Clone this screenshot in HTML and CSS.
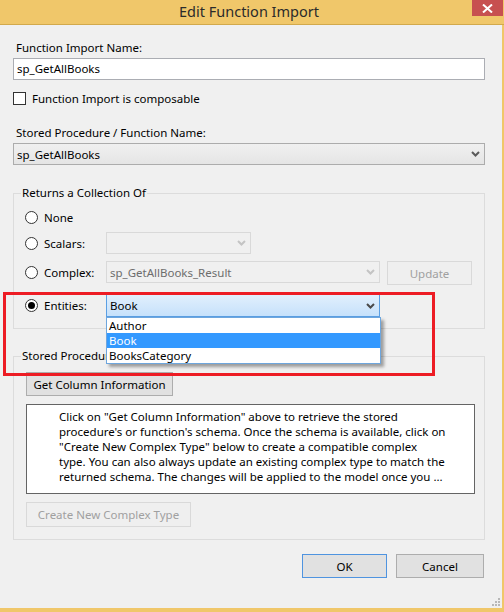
FILE: index.html
```html
<!DOCTYPE html>
<html>
<head>
<meta charset="utf-8">
<link rel="stylesheet" href="styles.css">
</head>
<body>
<div class="window">
  <div class="titlebar">
    <span class="title">Edit Function Import</span>
    <span class="close"><svg width="11" height="9" viewBox="0 0 11 9"><path d="M1 0.5 L10 8.5 M10 0.5 L1 8.5" stroke="#fff" stroke-width="2"/></svg></span>
  </div>
  <div class="content">
    <div class="label l1">Function Import Name:</div>
    <div class="textbox">sp_GetAllBooks</div>
    <div class="check-row">
      <span class="checkbox"></span>
      <span>Function Import is composable</span>
    </div>
    <div class="label l2">Stored Procedure / Function Name:</div>
    <div class="combo combo-normal">
      <span>sp_GetAllBooks</span>
      <svg class="arrow" width="9" height="6" viewBox="0 0 9 6"><path d="M1 1 L4.5 4.5 L8 1" stroke="#5a5a5a" stroke-width="2" fill="none"/></svg>
    </div>

    <div class="group g1">
      <div class="group-title">Returns a Collection Of</div>
      <div class="radio-row r-none">
        <span class="radio"></span><span class="rlabel">None</span>
      </div>
      <div class="radio-row r-scalars">
        <span class="radio"></span><span class="rlabel">Scalars:</span>
        <div class="combo combo-disabled c-scalars">
          <span></span>
          <svg class="arrow" width="9" height="6" viewBox="0 0 9 6"><path d="M1 1 L4.5 4.5 L8 1" stroke="#c4c4c4" stroke-width="2" fill="none"/></svg>
        </div>
      </div>
      <div class="radio-row r-complex">
        <span class="radio"></span><span class="rlabel">Complex:</span>
        <div class="combo combo-disabled c-complex">
          <span class="dis-text">sp_GetAllBooks_Result</span>
          <svg class="arrow" width="9" height="6" viewBox="0 0 9 6"><path d="M1 1 L4.5 4.5 L8 1" stroke="#c4c4c4" stroke-width="2" fill="none"/></svg>
        </div>
        <div class="btn btn-disabled b-update">Update</div>
      </div>
      <div class="radio-row r-entities">
        <span class="radio checked"></span><span class="rlabel">Entities:</span>
        <div class="combo combo-active c-entities">
          <span>Book</span>
          <svg class="arrow" width="9" height="6" viewBox="0 0 9 6"><path d="M1 1 L4.5 4.5 L8 1" stroke="#4a4a4a" stroke-width="2" fill="none"/></svg>
          <div class="dropdown">
            <div class="opt">Author</div>
            <div class="opt sel">Book</div>
            <div class="opt">BooksCategory</div>
          </div>
        </div>
      </div>
    </div>

    <div class="group g2">
      <div class="group-title">Stored Procedure Column Information</div>
      <div class="btn b-getcol">Get Column Information</div>
      <div class="info">Click on "Get Column Information" above to retrieve the stored<br>procedure's or function's schema. Once the schema is available, click on<br>"Create New Complex Type" below to create a compatible complex<br>type. You can also always update an existing complex type to match the<br>returned schema. The changes will be applied to the model once you ...</div>
      <div class="btn btn-disabled b-create">Create New Complex Type</div>
    </div>

    <div class="footer">
      <div class="btn btn-default b-ok">OK</div>
      <div class="btn b-cancel">Cancel</div>
    </div>
    <div class="grip"><svg width="8" height="8" viewBox="0 0 8 8" fill="#b8b8b8"><rect x="6" y="0" width="2" height="2"/><rect x="3" y="3" width="2" height="2"/><rect x="6" y="3" width="2" height="2"/><rect x="0" y="6" width="2" height="2"/><rect x="3" y="6" width="2" height="2"/><rect x="6" y="6" width="2" height="2"/></svg></div>
  </div>
  <div class="highlight"></div>
</div>
</body>
</html>
```

FILE: styles.css
```css
* { box-sizing: border-box; }
html, body { margin: 0; padding: 0; }
body {
  width: 504px;
  height: 612px;
  overflow: hidden;
  font-family: "Noto Sans", "Open Sans", sans-serif;
  font-size: 11.5px;
  color: #000;
  background: #f0f0f0;
}
.window {
  position: relative;
  width: 504px;
  height: 612px;
  background: #f0c76a;
  display: flex;
  flex-direction: column;
}
.titlebar {
  height: 25px;
  border-bottom: 1px solid #d2a94c;
  display: flex;
  align-items: flex-start;
  justify-content: center;
  position: relative;
}
.title {
  font-size: 14.5px;
  color: #2b2b2b;
  line-height: 22px;
  margin-left: -6px;
}
.close {
  position: absolute;
  right: 1px;
  top: 0;
  width: 31px;
  height: 16px;
  background: #c75050;
  display: flex;
  align-items: center;
  justify-content: center;
}
.content {
  flex: 1;
  background: #f0f0f0;
  margin: 0 2px 4px 0;
  padding: 0 17px 0 13px;
  position: relative;
  display: flex;
  flex-direction: column;
}
.label { line-height: 16px; padding-left: 3px; }
.l1 { margin-top: 15px; }
.textbox {
  margin-top: 2px;
  height: 22px;
  background: #fff;
  border: 1px solid #abadb3;
  padding-left: 3px;
  line-height: 20px;
}
.check-row {
  margin-top: 12px;
  display: flex;
  align-items: center;
  height: 13px;
  gap: 6px;
}
.checkbox {
  width: 13px;
  height: 13px;
  border: 1px solid #333;
  background: #fff;
}
.l2 { margin-top: 20px; }
.combo {
  height: 22px;
  border: 1px solid #acacac;
  display: flex;
  align-items: center;
  justify-content: space-between;
  padding: 0 4px 0 3px;
  position: relative;
}
.combo-normal {
  margin-top: 2px;
  background: linear-gradient(#f0f0f0, #e5e5e5);
}
.combo-disabled {
  background: #f0f0f0;
  border-color: #d9d9d9;
}
.dis-text { color: #6d6d6d; }
.combo-active {
  background: linear-gradient(#e1effd, #c6e1fb);
  border-color: #5b9fe3;
  height: 23px;
}
.arrow { flex: none; }

.group {
  border: 1px solid #dcdcdc;
  display: flex;
  flex-direction: column;
}
.group-title {
  margin-top: -9px;
  background: #f0f0f0;
  align-self: flex-start;
  padding: 0 1px;
  line-height: 16px;
}
.g1 { margin-top: 28px; height: 136px; padding-left: 11px; }
.g1 .group-title { margin-left: -4px; }
.radio-row {
  display: flex;
  align-items: center;
  height: 22px;
}
.radio {
  width: 13px;
  height: 13px;
  border-radius: 50%;
  border: 1px solid #333;
  background: #fff;
  flex: none;
  display: flex;
  align-items: center;
  justify-content: center;
}
.radio.checked::after {
  content: "";
  width: 7px;
  height: 7px;
  border-radius: 50%;
  background: #000;
}
.rlabel { margin-left: 6px; width: 62px; }
.r-none { margin-top: 5px; }
.r-scalars { margin-top: 4px; }
.r-complex { margin-top: 7px; }
.r-entities { margin-top: 11px; height: 23px; }
.c-scalars { width: 145px; }
.c-complex { width: 274px; }
.c-entities { width: 274px; }
.btn {
  height: 24px;
  border: 1px solid #adadad;
  background: #e1e1e1;
  display: flex;
  align-items: center;
  justify-content: center;
}
.btn-disabled {
  background: #efefef;
  border-color: #d9d9d9;
  color: #a0a0a0;
}
.b-update { width: 85px; margin: 2px 0 0 7px; }
.dropdown {
  position: absolute;
  left: -1px;
  top: 22px;
  width: 275px;
  background: #fff;
  border: 1px solid #6ea6dd;
  box-shadow: 3px 3px 3px rgba(0,0,0,0.35);
  padding: 0;
  z-index: 5;
}
.opt { height: 15px; line-height: 15px; padding-left: 2px; }
.opt.sel { background: #3399ff; color: #fff; }

.g2 { margin-top: 27px; height: 184px; padding-left: 12px; }
.g2 .group-title { margin-left: -5px; }
.b-getcol { width: 147px; margin-top: 8px; }
.info {
  margin-top: 8px;
  width: 449px;
  height: 90px;
  background: #fff;
  border: 1px solid #646464;
  padding: 4px 0 0 32px;
  line-height: 15px;
  white-space: nowrap;
  overflow: hidden;
}
.b-create { width: 165px; height: 25px; margin-top: 8px; }

.footer {
  margin-top: 14px;
  display: flex;
  justify-content: flex-end;
  gap: 9px;
  padding-right: 1px;
}
.b-ok { width: 85px; border-color: #4f94e0; }
.b-cancel { width: 88px; }
.grip {
  position: absolute;
  right: 2px;
  bottom: 2px;
  line-height: 0;
}
.highlight {
  position: absolute;
  left: 3px;
  top: 292px;
  width: 432px;
  height: 84px;
  border: 3px solid #ed1c24;
  z-index: 10;
  pointer-events: none;
}
```
